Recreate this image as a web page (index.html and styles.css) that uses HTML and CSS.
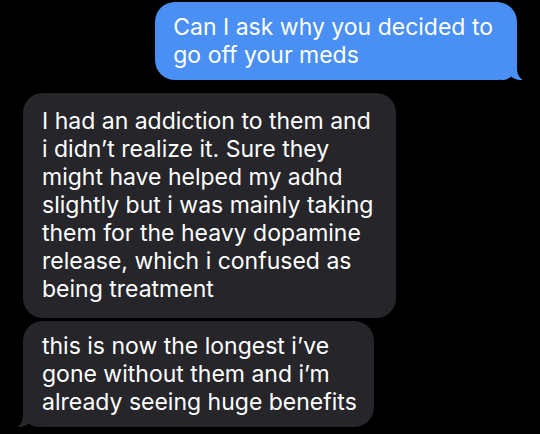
FILE: index.html
```html
<!DOCTYPE html>
<html>
<head>
<meta charset="utf-8">
<link rel="stylesheet" href="styles.css">
</head>
<body>
<div class="thread">
  <div class="row row-out">
    <div class="bubble out">Can I ask why you decided to<br>go off your meds
      <svg class="tail tail-right" viewBox="0 0 22 22" width="22" height="22"><path d="M14 0 L16 0 L16 10 C16 16 18.5 20 22 22 C17 22.5 13 21 10 18.5 C8 20.5 5 22 0 22 L0 0 Z"/></svg>
    </div>
  </div>
  <div class="group">
    <div class="bubble in first">I had an addiction to them and<br>i didn’t realize it. Sure they<br>might have helped my adhd<br>slightly but i was mainly taking<br>them for the heavy dopamine<br>release, which i confused as<br>being treatment</div>
    <div class="bubble in last">this is now the longest i’ve<br>gone without them and i’m<br>already seeing huge benefits
      <svg class="tail tail-left" viewBox="0 0 22 22" width="22" height="22"><path d="M8 0 L6 0 L6 10 C6 16 3.5 20 0 22 C5 22.5 9 21 12 18.5 C14 20.5 17 22 22 22 L22 0 Z"/></svg>
    </div>
  </div>
</div>
</body>
</html>
```
FILE: styles.css
```css
html, body {
  margin: 0;
  padding: 0;
  background: #000;
}
body {
  width: 540px;
  height: 434px;
  overflow: hidden;
  font-family: "Inter", "Noto Sans", sans-serif;
}
.thread {
  display: flex;
  flex-direction: column;
  gap: 13px;
  padding: 2px 23px 0 23px;
}
.row-out {
  display: flex;
  justify-content: flex-end;
}
.group {
  display: flex;
  flex-direction: column;
  align-items: flex-start;
  gap: 3px;
}
.bubble {
  position: relative;
  width: fit-content;
  font-size: 23px;
  line-height: 28px;
  color: #fff;
  border-radius: 20px;
  white-space: nowrap;
}
.out {
  background: #4a8ff3;
  padding: 11px 24px 11px 18px;
}
.in {
  background: #262529;
}
.in.first {
  padding: 14px 23px 15px 19px;
}
.in.last {
  padding: 11px 17px 11px 19px;
}
.tail {
  position: absolute;
  bottom: 0;
}
.tail-right {
  right: -6px;
  fill: #4a8ff3;
}
.tail-left {
  left: -6px;
  fill: #262529;
}
```
